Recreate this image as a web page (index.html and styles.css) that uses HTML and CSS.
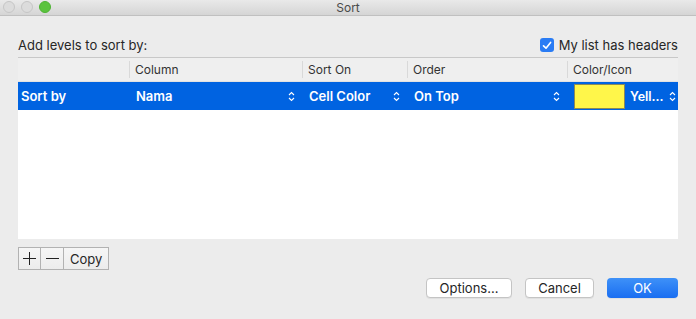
FILE: index.html
```html
<!DOCTYPE html>
<html lang="en">
<head>
    <meta charset="UTF-8">
    <title>Sort</title>
    <link rel="stylesheet" href="styles.css">
</head>
<body>
    <div class="window">
        <div class="titlebar">
            <div class="lights">
                <span class="light"></span>
                <span class="light"></span>
                <span class="light green"></span>
            </div>
            <span class="title">Sort</span>
        </div>

        <div class="content">
            <div class="top-row">
                <span>Add levels to sort by:</span>
                <label class="check">
                    <span class="box">
                        <svg width="10" height="9" viewBox="0 0 10 9"><path d="M1.5 4.8 L4 7.2 L8.6 1.4" fill="none" stroke="#fff" stroke-width="1.6" stroke-linecap="round" stroke-linejoin="round"/></svg>
                    </span>
                    My list has headers
                </label>
            </div>

            <div class="table">
                <div class="row head">
                    <div class="cell"></div>
                    <div class="cell">Column</div>
                    <div class="cell">Sort On</div>
                    <div class="cell">Order</div>
                    <div class="cell">Color/Icon</div>
                </div>
                <div class="row selected">
                    <div class="cell">Sort by</div>
                    <div class="cell pop">Nama <svg class="updown" width="7" height="11" viewBox="0 0 7 11"><path d="M1 4 L3.5 1.5 L6 4 M1 7 L3.5 9.5 L6 7" fill="none" stroke="#fff" stroke-width="1.1"/></svg></div>
                    <div class="cell pop">Cell Color <svg class="updown" width="7" height="11" viewBox="0 0 7 11"><path d="M1 4 L3.5 1.5 L6 4 M1 7 L3.5 9.5 L6 7" fill="none" stroke="#fff" stroke-width="1.1"/></svg></div>
                    <div class="cell pop">On Top <svg class="updown" width="7" height="11" viewBox="0 0 7 11"><path d="M1 4 L3.5 1.5 L6 4 M1 7 L3.5 9.5 L6 7" fill="none" stroke="#fff" stroke-width="1.1"/></svg></div>
                    <div class="cell color">
                        <span class="swatch"></span>
                        <span class="swatch-name">Yell...</span>
                        <svg class="updown" width="7" height="11" viewBox="0 0 7 11"><path d="M1 4 L3.5 1.5 L6 4 M1 7 L3.5 9.5 L6 7" fill="none" stroke="#fff" stroke-width="1.1"/></svg>
                    </div>
                </div>
            </div>

            <div class="seg">
                <button class="seg-btn icon">
                    <svg width="13" height="13" viewBox="0 0 13 13"><path d="M6.5 0 V13 M0 6.5 H13" stroke="#222" stroke-width="1"/></svg>
                </button>
                <button class="seg-btn icon">
                    <svg width="13" height="13" viewBox="0 0 13 13"><path d="M0 6.5 H13" stroke="#222" stroke-width="1"/></svg>
                </button>
                <button class="seg-btn">Copy</button>
            </div>

            <div class="actions">
                <button class="btn opt">Options...</button>
                <button class="btn cancel">Cancel</button>
                <button class="btn primary">OK</button>
            </div>
        </div>
    </div>
</body>
</html>
```

FILE: styles.css
```css
* {
    margin: 0;
    padding: 0;
    box-sizing: border-box;
}

body {
    font-family: Inter, "Liberation Sans", Arial, sans-serif;
    font-size: 13px;
    color: #262626;
    background: #ececec;
    width: 696px;
    height: 319px;
    overflow: hidden;
}

.window {
    width: 696px;
    height: 319px;
    background: #ececec;
}

.titlebar {
    height: 16px;
    position: relative;
    display: flex;
    align-items: center;
    justify-content: center;
    background: linear-gradient(#e9e9e9, #d5d5d5);
    border-bottom: 1px solid #c0c0c0;
}

.lights {
    position: absolute;
    left: 3px;
    top: 1px;
    display: flex;
    gap: 6px;
}

.light {
    flex: none;
    width: 12px;
    height: 12px;
    border-radius: 50%;
    border: 1px solid #c6c6c6;
    background: #dcdcdc;
}

.light.green {
    background: #5bc33e;
    border-color: #4eb334;
}

.title {
    font-size: 12px;
    color: #4a4a4a;
}

.content {
    padding: 0 18px;
}

.top-row {
    height: 41px;
    display: flex;
    justify-content: space-between;
    align-items: flex-end;
    padding-bottom: 4px;
}

.check {
    display: flex;
    align-items: center;
    gap: 5px;
}

.box {
    width: 14px;
    height: 14px;
    border-radius: 3px;
    background: #2a7cf4;
    display: flex;
    align-items: center;
    justify-content: center;
}

.table {
    height: 182px;
    background: #fff;
    border-top: 1px solid #c8c8c8;
}

.row {
    display: grid;
    grid-template-columns: 111px 173px 105px 160px 111px;
}

.head {
    height: 24px;
    background: #efefef;
    border-bottom: 1px solid #e2e2e2;
    font-size: 12px;
    color: #333;
}

.head .cell {
    display: flex;
    align-items: center;
    padding-left: 5px;
    border-left: 1px solid #d9d9d9;
    margin: 3px 0;
}

.head .cell:first-child {
    border-left: none;
}

.selected {
    height: 28px;
    background: #0063e1;
    color: #fff;
    font-weight: 600;
}

.selected .cell {
    display: flex;
    align-items: center;
    padding-left: 3px;
}

.selected .pop {
    justify-content: space-between;
    padding-left: 7px;
    padding-right: 7px;
}

.selected .color {
    padding-left: 7px;
    padding-right: 0;
    gap: 5px;
}

.swatch {
    flex: none;
    width: 51px;
    height: 25px;
    background: #fff64a;
    border: 1px solid #8a8a58;
}

.swatch-name {
    flex: none;
    font-size: 12.5px;
}

.updown {
    flex: none;
}

.seg {
    display: flex;
    margin-top: 8px;
}

.seg-btn {
    font-family: inherit;
    font-size: 13px;
    height: 23px;
    background: linear-gradient(#f6f6f6, #ececec);
    border: 1px solid #b2b2b2;
    border-left: none;
    color: #262626;
    padding: 0 6px;
    display: flex;
    align-items: center;
    justify-content: center;
}

.seg-btn:first-child {
    border-left: 1px solid #b2b2b2;
}

.seg-btn.icon {
    width: 23px;
    padding: 0;
}

.actions {
    display: flex;
    justify-content: flex-end;
    gap: 13px;
    margin-top: 8px;
}

.btn {
    font-family: inherit;
    font-size: 13px;
    height: 20px;
    border-radius: 4px;
    background: #fff;
    border: 1px solid #c4c4c4;
    box-shadow: 0 1px 0 rgba(0, 0, 0, 0.05);
    color: #262626;
}

.opt {
    width: 86px;
}

.cancel {
    width: 69px;
}

.primary {
    width: 71px;
    color: #fff;
    border: none;
    background: linear-gradient(#3e91f8, #1a6ef1);
}
```
